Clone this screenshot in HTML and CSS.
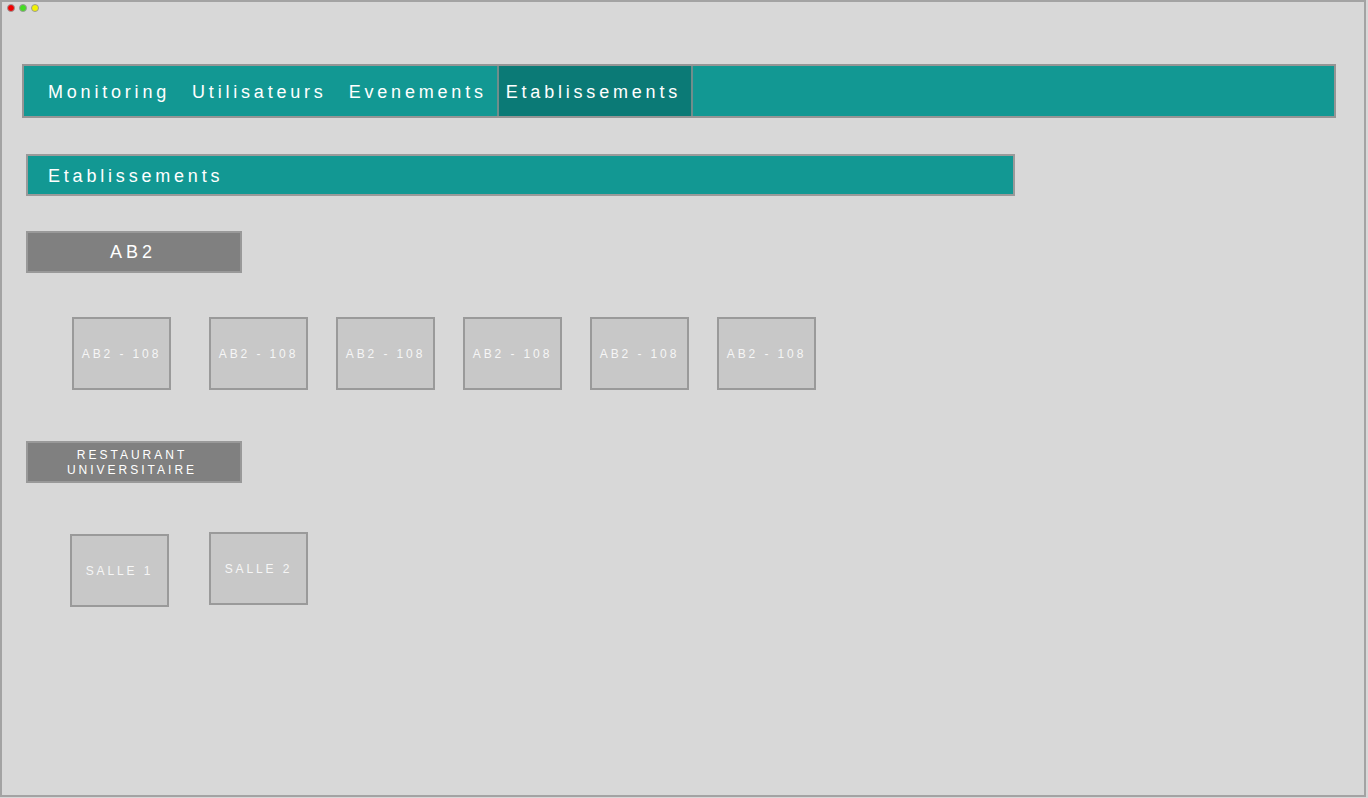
FILE: index.html
```html
<!DOCTYPE html>
<html lang="fr">
<head>
<meta charset="utf-8">
<title>Etablissements</title>
<link rel="stylesheet" href="styles.css">
</head>
<body>
<div class="frame">
  <div class="lights">
    <span class="light red"></span>
    <span class="light green"></span>
    <span class="light yellow"></span>
  </div>
  <nav class="nav">
    <a class="nav-item">Monitoring</a>
    <a class="nav-item">Utilisateurs</a>
    <a class="nav-item">Evenements</a>
    <a class="nav-item active">Etablissements</a>
  </nav>
  <main class="content">
    <div class="section-title">Etablissements</div>

    <div class="group-label big">AB2</div>
    <div class="rooms">
      <div class="room first">AB2 - 108</div>
      <div class="room">AB2 - 108</div>
      <div class="room">AB2 - 108</div>
      <div class="room">AB2 - 108</div>
      <div class="room">AB2 - 108</div>
      <div class="room">AB2 - 108</div>
    </div>

    <div class="group-label small">RESTAURANT<br>UNIVERSITAIRE</div>
    <div class="rooms rooms-ru">
      <div class="room low">SALLE 1</div>
      <div class="room">SALLE 2</div>
    </div>
  </main>
</div>
</body>
</html>
```
FILE: styles.css
```css
* { box-sizing: border-box; }
html, body { margin: 0; padding: 0; background: #d8d8d8; }
body { font-family: "Liberation Sans", Arial, sans-serif; color: #fff; }

.frame {
  width: 1366px;
  height: 797px;
  border: 2px solid #a3a3a3;
  background: #d8d8d8;
}

.lights { display: flex; gap: 4px; padding: 2px 0 0 5px; height: 10px; }
.light { width: 8px; height: 8px; border-radius: 50%; border: 1px solid #9a9a9a; }
.red { background: #f00000; }
.green { background: #44dd22; }
.yellow { background: #f2f200; }

.nav {
  display: flex;
  margin: 52px 0 0 20px;
  width: 1314px;
  height: 54px;
  border: 2px solid #959595;
  background: #129893;
  padding-left: 16px;
}
.nav-item {
  display: flex;
  align-items: center;
  padding: 3px 14px 0 8px;
  font-size: 18px;
  letter-spacing: 3.8px;
  color: #fff;
}
.nav-item.active {
  background: #0b7a76;
  border-left: 2px solid #6f8e8c;
  border-right: 2px solid #6f8e8c;
  margin-left: -4px;
  padding: 3px 10px 0 7px;
}

.content { padding-left: 24px; }

.section-title {
  margin-top: 36px;
  width: 989px;
  height: 42px;
  border: 2px solid #9a9a9a;
  background: #129893;
  padding: 2px 0 0 20px;
  font-size: 18px;
  letter-spacing: 3.8px;
  display: flex;
  align-items: center;
}

.group-label {
  width: 216px;
  height: 42px;
  border: 2px solid #999;
  background: #808080;
  display: flex;
  align-items: center;
  justify-content: center;
  text-align: center;
}
.group-label.big { margin-top: 35px; font-size: 18px; letter-spacing: 4px; padding-right: 2px; }
.group-label.small { margin-top: 51px; font-size: 12px; letter-spacing: 3px; line-height: 15px; padding: 2px 4px 0 0; }

.rooms {
  display: flex;
  align-items: flex-start;
  gap: 28px;
  margin: 44px 0 0 46px;
}
.room {
  width: 99px;
  height: 73px;
  border: 2px solid #9a9a9a;
  background: #c8c8c8;
  display: flex;
  align-items: center;
  justify-content: center;
  padding-top: 1px;
  font-size: 12px;
  letter-spacing: 2.9px;
  color: #f6f6f6;
}
.room.first { margin-right: 10px; }

.rooms-ru { margin: 49px 0 0 44px; gap: 40px; }
.room.low { margin-top: 2px; }
```
